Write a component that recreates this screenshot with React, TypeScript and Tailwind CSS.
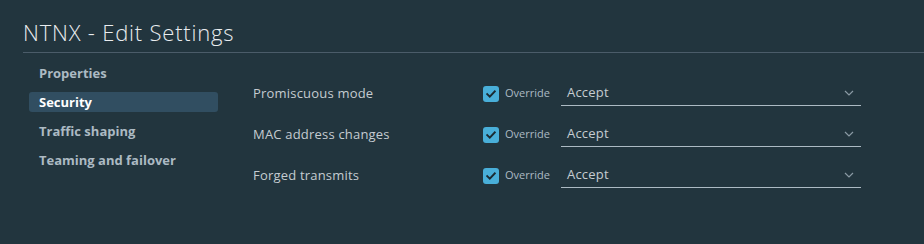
import { useState } from 'react'

const sections = ['Properties', 'Security', 'Traffic shaping', 'Teaming and failover']

const policies = [
  { label: 'Promiscuous mode', value: 'Accept' },
  { label: 'MAC address changes', value: 'Accept' },
  { label: 'Forged transmits', value: 'Accept' },
]

function Check() {
  return (
    <span className="flex h-4 w-4 items-center justify-center rounded-[3px] bg-[#49afd9]">
      <svg width="10" height="8" viewBox="0 0 10 8" fill="none">
        <path d="M1.2 4.1 3.8 6.6 8.8 1.4" stroke="#1b2a32" strokeWidth="2" strokeLinecap="square" />
      </svg>
    </span>
  )
}

export default function App() {
  const [active, setActive] = useState('Security')

  return (
    <div
      className="h-[244px] w-[924px] overflow-hidden bg-[#22353e] text-[#acbac3]"
      style={{ fontFamily: '"Open Sans", Lato, sans-serif' }}
    >
      <div className="ml-[23px] border-b border-[#4b5c69] pt-[18px] pb-[6px]">
        <h1 className="text-[22px] leading-[28px] font-light tracking-[0.8px] text-[#e9ecef]">
          NTNX - Edit Settings
        </h1>
      </div>

      {/* Body */}
      <div className="flex">
        <div className="ml-[29px] mt-[10px] flex w-[189px] flex-col gap-[9px]">
          {sections.map((s) => (
            <button
              key={s}
              onClick={() => setActive(s)}
              className={
                'h-5 rounded-[3px] pl-[10px] text-left text-[13px] font-bold leading-5 ' +
                (active === s ? 'bg-[#314e61] text-white' : 'text-[#acbac3]')
              }
            >
              {s}
            </button>
          ))}
        </div>

        <div className="ml-[35px] mt-[20px] flex flex-col">
          {policies.map((p) => (
            <div key={p.label} className="flex h-[41px] items-center">
              <div className="w-[230px] text-[13px] tracking-[0.2px] text-[#c5ccd1]">{p.label}</div>
              <Check />
              <span className="ml-[6px] w-[56px] text-[11px] text-[#acbac3]">Override</span>
              <div className="flex h-6 w-[300px] items-center justify-between border-b border-[#acbac3] pl-[6px] pr-[7px]">
                <span className="text-[13px] tracking-[0.2px] text-[#c5ccd1]">{p.value}</span>
                <svg width="10" height="6" viewBox="0 0 10 6" fill="none">
                  <path d="M1 1 5 5 9 1" stroke="#8a9aa4" strokeWidth="1.2" />
                </svg>
              </div>
            </div>
          ))}
        </div>
      </div>
    </div>
  )
}
